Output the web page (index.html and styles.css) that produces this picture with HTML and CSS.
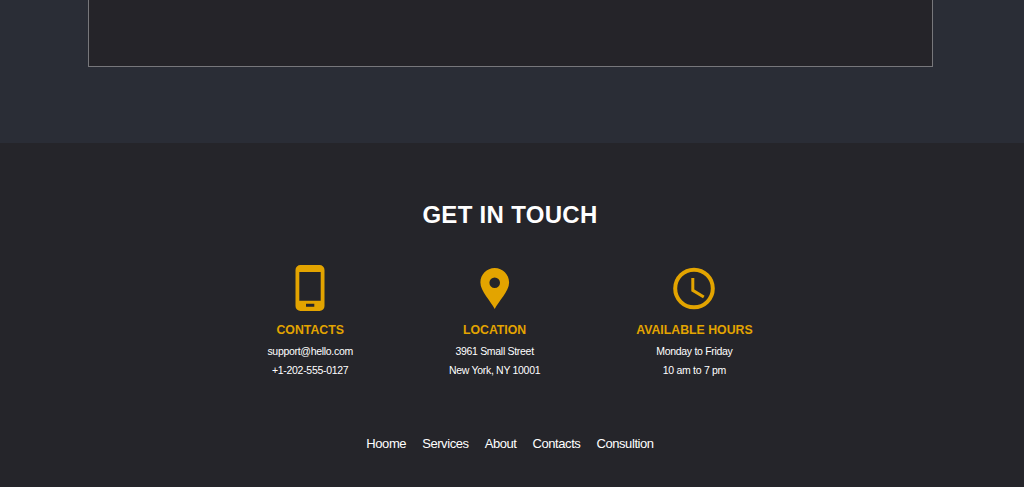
FILE: index.html
```html
<!DOCTYPE html>
<html lang="en">
<head>
<meta charset="utf-8">
<title>Get in touch</title>
<link rel="stylesheet" href="styles.css">
</head>
<body>
<section class="hero">
  <div class="frame"></div>
</section>
<footer class="footer">
  <h2 class="title">GET IN TOUCH</h2>
  <div class="columns">
    <div class="col">
      <svg class="icon" width="30" height="46" viewBox="0 0 30 46" aria-hidden="true">
        <path fill="#e3a400" fill-rule="evenodd" d="M5.500 0h19A5 5 0 0 1 29.500 5v36a5 5 0 0 1-5 5h-19a5 5 0 0 1-5-5V5a5 5 0 0 1 5-5zM4.300 7v28.700h21.400V7zM11 38.700v3h8.300v-3z"/>
      </svg>
      <h3 class="label">CONTACTS</h3>
      <p class="line">support@hello.com</p>
      <p class="line">+1-202-555-0127</p>
    </div>
    <div class="col">
      <svg class="icon" width="30" height="46" viewBox="0 0 30 46" aria-hidden="true">
        <path fill="#e3a400" fill-rule="evenodd" d="M14.700 3C6.700 3 .4 9.500.4 17.500c0 9 10.600 18.800 14.300 26.500 3.700-7.700 14.400-17.500 14.400-26.500C29.100 9.500 22.700 3 14.700 3zM14.700 12.400a5.300 5.300 0 1 1 0 10.600 5.300 5.300 0 0 1 0-10.600z"/>
      </svg>
      <h3 class="label">LOCATION</h3>
      <p class="line">3961 Small Street</p>
      <p class="line">New York, NY 10001</p>
    </div>
    <div class="col">
      <svg class="icon" width="44" height="46" viewBox="0 0 44 46" aria-hidden="true">
        <circle cx="22" cy="23.500" r="18.800" fill="none" stroke="#e3a400" stroke-width="4"/>
        <path fill="none" stroke="#e3a400" stroke-width="3" d="M20.800 13v12.300l11 6.700"/>
      </svg>
      <h3 class="label">AVAILABLE HOURS</h3>
      <p class="line">Monday to Friday</p>
      <p class="line">10 am to 7 pm</p>
    </div>
  </div>
  <nav class="nav">
    <a class="link" href="#">Hoome</a>
    <a class="link" href="#">Services</a>
    <a class="link" href="#">About</a>
    <a class="link" href="#">Contacts</a>
    <a class="link" href="#">Consultion</a>
  </nav>
</footer>
</body>
</html>
```
FILE: styles.css
```css
* {
  box-sizing: border-box;
}

html,
body {
  margin: 0;
  padding: 0;
  overflow: hidden;
}

body {
  height: 487px;
  background: #25252a;
  font-family: "Liberation Sans", Arial, sans-serif;
  color: #fff;
}

.hero {
  height: 143px;
  padding: 0 91px 0 88px;
  background: #2a2d36;
}

.frame {
  height: 67px;
  background: #252429;
  border: 1px solid #77777b;
  border-top: 0;
}

.footer {
  display: flex;
  flex-direction: column;
  align-items: center;
  height: 344px;
  padding: 57px 4px 0 0;
  background: #25252a;
}

.title {
  margin: 0;
  font-size: 24px;
  line-height: 29px;
  font-weight: 700;
  letter-spacing: 0.3px;
}

.columns {
  display: flex;
  gap: 96px;
  margin-top: 22px;
}

.col {
  display: flex;
  flex-direction: column;
  align-items: center;
}

.icon {
  display: block;
  margin-top: 14px;
}

.label {
  margin: 11px 0 0;
  font-size: 12.300px;
  line-height: 16px;
  font-weight: 700;
  color: #e3a400;
}

.line {
  margin: 7px 0 0;
  font-size: 10.500px;
  line-height: 13px;
  letter-spacing: -0.3px;
  white-space: nowrap;
}

.line + .line {
  margin-top: 6px;
}

.nav {
  display: flex;
  gap: 16px;
  margin-top: 59px;
}

.link {
  font-size: 13px;
  line-height: 16px;
  letter-spacing: -0.42px;
  color: #fff;
  text-decoration: none;
}
```
